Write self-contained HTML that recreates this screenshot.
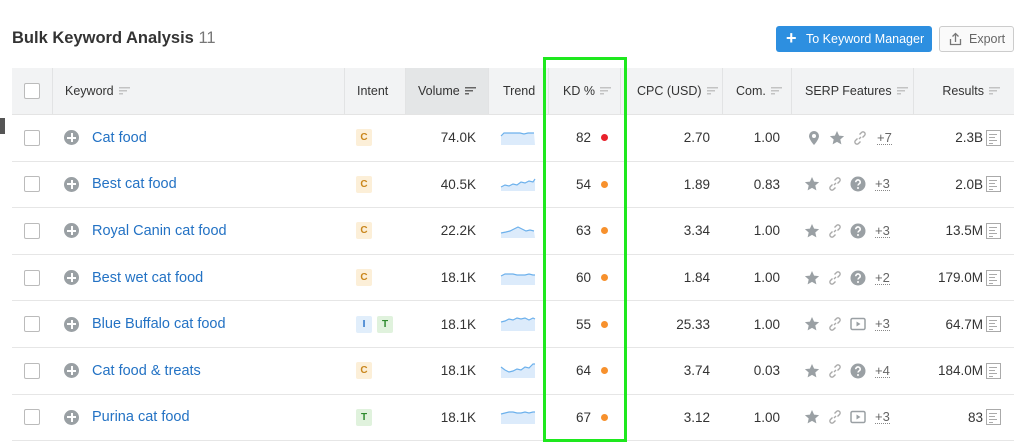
<!DOCTYPE html>
<html><head><meta charset="utf-8"><style>
*{margin:0;padding:0;box-sizing:border-box}
body{width:1024px;height:444px;background:#fff;font-family:"Liberation Sans",sans-serif;color:#333;position:relative;overflow:hidden}
.title{position:absolute;left:12px;top:29px;font-size:16.5px;font-weight:bold;color:#333}
.title span{font-weight:normal;color:#777}
.btn1{position:absolute;left:776px;top:26px;width:156px;height:26px;background:#2d8fe0;border-radius:3px;color:#fff;font-size:12.5px;line-height:26px;padding-left:30px}
.btn1:before{content:"+";position:absolute;left:10px;top:-1px;font-size:18px;font-weight:bold}
.btn2{position:absolute;left:939px;top:26px;width:75px;height:26px;border:1px solid #ccc;border-radius:3px;color:#666;font-size:12.5px;line-height:24px;padding-left:29px;background:#fafafa}
.hdr{position:absolute;left:12px;top:68px;width:1002px;height:47px;background:#f2f3f4;border-bottom:1px solid #e4e4e4}
.c{position:absolute;height:100%;display:flex;align-items:center;font-size:12.5px;color:#333}
.hdr .c{border-left:1px solid #e2e3e4}
.r{position:absolute;left:12px;width:1002px;height:46.6px;border-bottom:1px solid #e6e6e6}
.cb{width:16px;height:16px;border:1px solid #bbb;border-radius:2px;background:#fff}
.s{display:inline-block;width:11px;height:8px;margin-left:5px;background:linear-gradient(#c3c3c3,#c3c3c3) 0 0/11px 1.5px no-repeat,linear-gradient(#c3c3c3,#c3c3c3) 0 3px/8px 1.5px no-repeat,linear-gradient(#c3c3c3,#c3c3c3) 0 6px/4px 1.5px no-repeat}
.plus{width:15px;height:15px;border-radius:50%;background:#9aa0a4;position:relative;margin-right:13px}
.plus:before{content:"";position:absolute;left:3px;top:6.5px;width:9px;height:2px;background:#fff}
.plus:after{content:"";position:absolute;left:6.5px;top:3px;width:2px;height:9px;background:#fff}
.kw{color:#2372c4;font-size:14.5px}
.t{display:inline-block;width:16px;height:17px;border-radius:2px;font-size:10px;font-weight:bold;text-align:center;line-height:17px;margin-right:5px}
.tc{background:#fcefd8;color:#c9861c}.tt{background:#e0f2dd;color:#2c8a2c}.ti{background:#e1eefb;color:#2a74c9}
.n{font-size:13.5px;justify-content:flex-end}
.dot{display:inline-block;width:7px;height:7px;border-radius:50%;background:#f7912d;margin-left:10px}
.more{font-size:13px;color:#666;border-bottom:1px dotted #888;line-height:13px;margin-left:2px}
.doc{display:inline-block;width:15px;height:16px;border:1px solid #aaa;margin-left:3px;background:linear-gradient(#aaa,#aaa) 2px 3px/8px 1px no-repeat,linear-gradient(#aaa,#aaa) 2px 6px/6px 1px no-repeat,linear-gradient(#aaa,#aaa) 2px 9px/8px 1px no-repeat,linear-gradient(#aaa,#aaa) 2px 12px/4px 1px no-repeat}
svg.i{margin-right:7px}
.green{position:absolute;left:543px;top:57px;width:84px;height:385px;border:3px solid #1ee81e}
.tab{position:absolute;left:0;top:118px;width:5px;height:16px;background:#555}
</style></head><body>
<div class="title">Bulk Keyword Analysis <span>11</span></div>
<div class="btn1">To Keyword Manager</div>
<div class="btn2"><svg style="position:absolute;left:9px;top:5px" width="13" height="14" viewBox="0 0 13 14"><path d="M6.5 10V2M3.5 4.5l3-3 3 3M1.5 7v5.5h10V7" fill="none" stroke="#777" stroke-width="1.3"/></svg>Export</div>
<div class="tab"></div>
<div class="hdr">
<div class="c" style="left:0;width:40px;border-left:none;justify-content:center"><div class="cb"></div></div>
<div class="c" style="left:40px;width:292px;padding-left:12px">Keyword<i class="s"></i></div>
<div class="c" style="left:332px;width:61px;padding-left:12px">Intent</div>
<div class="c" style="left:393px;width:83px;padding-left:12px;background:#e4e6e7">Volume<i class="s" style="background:linear-gradient(#666,#666) 0 0/11px 1.5px no-repeat,linear-gradient(#666,#666) 0 3px/8px 1.5px no-repeat,linear-gradient(#666,#666) 0 6px/4px 1.5px no-repeat"></i></div>
<div class="c" style="left:476px;width:60px;padding-left:14px">Trend</div>
<div class="c" style="left:536px;width:72px;padding-left:14px">KD %<i class="s"></i></div>
<div class="c" style="left:608px;width:102px;padding-left:16px">CPC (USD)<i class="s"></i></div>
<div class="c" style="left:710px;width:69px;padding-left:13px">Com.<i class="s"></i></div>
<div class="c" style="left:779px;width:122px;padding-left:13px">SERP Features<i class="s"></i></div>
<div class="c" style="left:901px;width:101px;justify-content:flex-end;padding-right:14px">Results<i class="s"></i></div>
</div>
<svg width="0" height="0" style="position:absolute">
<defs>
<symbol id="star" viewBox="0 0 16 16"><path d="M8 1l2.1 4.6 5 .5-3.8 3.4 1.1 4.9L8 11.9 3.6 14.4l1.1-4.9L.9 6.1l5-.5z" fill="#9aa0a4"/></symbol>
<symbol id="link" viewBox="0 0 16 16"><path d="M7 9l2-2M5.5 8.5l-2 2a2 2 0 003 3l2-2M10.5 7.5l2-2a2 2 0 00-3-3l-2 2" fill="none" stroke="#aaa" stroke-width="1.4"/></symbol>
<symbol id="q" viewBox="0 0 16 16"><circle cx="8" cy="8" r="7.5" fill="#9aa0a4"/><path d="M5.8 6.2a2.2 2.2 0 114 1.2c-.8.6-1.8.9-1.8 2.1" fill="none" stroke="#fff" stroke-width="1.6"/><circle cx="8" cy="12" r="1" fill="#fff"/></symbol>
<symbol id="pin" viewBox="0 0 16 16"><path d="M8 1a5 5 0 00-5 5c0 3.5 5 9 5 9s5-5.5 5-9a5 5 0 00-5-5z" fill="#9aa0a4"/><circle cx="8" cy="6" r="2" fill="#fff"/></symbol>
<symbol id="play" viewBox="0 0 16 16"><rect x="1" y="2.5" width="14" height="11" rx="1.5" fill="none" stroke="#9aa0a4" stroke-width="1.5"/><path d="M6.5 5.5v5l4-2.5z" fill="#9aa0a4"/></symbol>
</defs></svg>

<div class="r" style="top:115px">
<div class="c" style="left:0;width:40px;justify-content:center"><div class="cb"></div></div>
<div class="c" style="left:52px"><div class="plus"></div><span class="kw">Cat food</span></div>
<div class="c" style="left:344px"><span class="t tc">C</span></div>
<div class="c n" style="left:393px;width:71px">74.0K</div>
<div class="c" style="left:488px"><svg width="36" height="16"><path d="M1 6 4 3 8 3 12 3 16 3 20 3 24 4 28 3 32 3 34 3 35 15 1 15z" fill="#dcebfb"/><path d="M1 6 4 3 8 3 12 3 16 3 20 3 24 4 28 3 32 3 34 3" fill="none" stroke="#6db1ec" stroke-width="1.2"/></svg></div>
<div class="c n" style="left:536px;width:60px">82<span class="dot" style="background:#e8212b"></span></div>
<div class="c n" style="left:608px;width:90px">2.70</div>
<div class="c n" style="left:710px;width:58px">1.00</div>
<div class="c" style="left:794px"><svg class="i" width="16" height="16"><use href="#pin"/></svg><svg class="i" width="16" height="16"><use href="#star"/></svg><svg class="i" width="16" height="16"><use href="#link"/></svg><span class="more">+7</span></div>
<div class="c n" style="left:901px;width:88px">2.3B<i class="doc"></i></div>
</div>

<div class="r" style="top:161.6px">
<div class="c" style="left:0;width:40px;justify-content:center"><div class="cb"></div></div>
<div class="c" style="left:52px"><div class="plus"></div><span class="kw">Best cat food</span></div>
<div class="c" style="left:344px"><span class="t tc">C</span></div>
<div class="c n" style="left:393px;width:71px">40.5K</div>
<div class="c" style="left:488px"><svg width="36" height="16"><path d="M1 11 5 9 9 10 13 8 17 9 21 6 25 7 29 5 33 6 35 3 35 15 1 15z" fill="#dcebfb"/><path d="M1 11 5 9 9 10 13 8 17 9 21 6 25 7 29 5 33 6 35 3" fill="none" stroke="#6db1ec" stroke-width="1.2"/></svg></div>
<div class="c n" style="left:536px;width:60px">54<span class="dot"></span></div>
<div class="c n" style="left:608px;width:90px">1.89</div>
<div class="c n" style="left:710px;width:58px">0.83</div>
<div class="c" style="left:792px"><svg class="i" width="16" height="16"><use href="#star"/></svg><svg class="i" width="16" height="16"><use href="#link"/></svg><svg class="i" width="16" height="16"><use href="#q"/></svg><span class="more">+3</span></div>
<div class="c n" style="left:901px;width:88px">2.0B<i class="doc"></i></div>
</div>

<div class="r" style="top:208.2px">
<div class="c" style="left:0;width:40px;justify-content:center"><div class="cb"></div></div>
<div class="c" style="left:52px"><div class="plus"></div><span class="kw">Royal Canin cat food</span></div>
<div class="c" style="left:344px"><span class="t tc">C</span></div>
<div class="c n" style="left:393px;width:71px">22.2K</div>
<div class="c" style="left:488px"><svg width="36" height="16"><path d="M1 10 6 9 10 8 14 6 18 4 22 6 26 8 30 7 34 8 35 15 1 15z" fill="#dcebfb"/><path d="M1 10 6 9 10 8 14 6 18 4 22 6 26 8 30 7 34 8" fill="none" stroke="#6db1ec" stroke-width="1.2"/></svg></div>
<div class="c n" style="left:536px;width:60px">63<span class="dot"></span></div>
<div class="c n" style="left:608px;width:90px">3.34</div>
<div class="c n" style="left:710px;width:58px">1.00</div>
<div class="c" style="left:792px"><svg class="i" width="16" height="16"><use href="#star"/></svg><svg class="i" width="16" height="16"><use href="#link"/></svg><svg class="i" width="16" height="16"><use href="#q"/></svg><span class="more">+3</span></div>
<div class="c n" style="left:901px;width:88px">13.5M<i class="doc"></i></div>
</div>

<div class="r" style="top:254.8px">
<div class="c" style="left:0;width:40px;justify-content:center"><div class="cb"></div></div>
<div class="c" style="left:52px"><div class="plus"></div><span class="kw">Best wet cat food</span></div>
<div class="c" style="left:344px"><span class="t tc">C</span></div>
<div class="c n" style="left:393px;width:71px">18.1K</div>
<div class="c" style="left:488px"><svg width="36" height="16"><path d="M1 6 5 4 9 4 13 4 17 5 21 5 25 5 29 4 33 5 35 5 35 15 1 15z" fill="#dcebfb"/><path d="M1 6 5 4 9 4 13 4 17 5 21 5 25 5 29 4 33 5 35 5" fill="none" stroke="#6db1ec" stroke-width="1.2"/></svg></div>
<div class="c n" style="left:536px;width:60px">60<span class="dot"></span></div>
<div class="c n" style="left:608px;width:90px">1.84</div>
<div class="c n" style="left:710px;width:58px">1.00</div>
<div class="c" style="left:792px"><svg class="i" width="16" height="16"><use href="#star"/></svg><svg class="i" width="16" height="16"><use href="#link"/></svg><svg class="i" width="16" height="16"><use href="#q"/></svg><span class="more">+2</span></div>
<div class="c n" style="left:901px;width:88px">179.0M<i class="doc"></i></div>
</div>

<div class="r" style="top:301.4px">
<div class="c" style="left:0;width:40px;justify-content:center"><div class="cb"></div></div>
<div class="c" style="left:52px"><div class="plus"></div><span class="kw">Blue Buffalo cat food</span></div>
<div class="c" style="left:344px"><span class="t ti">I</span><span class="t tt">T</span></div>
<div class="c n" style="left:393px;width:71px">18.1K</div>
<div class="c" style="left:488px"><svg width="36" height="16"><path d="M1 6 5 5 9 3 13 4 17 2 21 3 25 2 29 4 33 2 35 3 35 15 1 15z" fill="#dcebfb"/><path d="M1 6 5 5 9 3 13 4 17 2 21 3 25 2 29 4 33 2 35 3" fill="none" stroke="#6db1ec" stroke-width="1.2"/></svg></div>
<div class="c n" style="left:536px;width:60px">55<span class="dot"></span></div>
<div class="c n" style="left:608px;width:90px">25.33</div>
<div class="c n" style="left:710px;width:58px">1.00</div>
<div class="c" style="left:792px"><svg class="i" width="16" height="16"><use href="#star"/></svg><svg class="i" width="16" height="16"><use href="#link"/></svg><svg class="i" width="16" height="16"><use href="#play"/></svg><span class="more">+3</span></div>
<div class="c n" style="left:901px;width:88px">64.7M<i class="doc"></i></div>
</div>

<div class="r" style="top:348px">
<div class="c" style="left:0;width:40px;justify-content:center"><div class="cb"></div></div>
<div class="c" style="left:52px"><div class="plus"></div><span class="kw">Cat food &amp; treats</span></div>
<div class="c" style="left:344px"><span class="t tc">C</span></div>
<div class="c n" style="left:393px;width:71px">18.1K</div>
<div class="c" style="left:488px"><svg width="36" height="16"><path d="M1 4 5 7 9 9 13 8 17 6 21 7 25 4 29 5 33 1 35 1 35 15 1 15z" fill="#dcebfb"/><path d="M1 4 5 7 9 9 13 8 17 6 21 7 25 4 29 5 33 1 35 1" fill="none" stroke="#6db1ec" stroke-width="1.2"/></svg></div>
<div class="c n" style="left:536px;width:60px">64<span class="dot"></span></div>
<div class="c n" style="left:608px;width:90px">3.74</div>
<div class="c n" style="left:710px;width:58px">0.03</div>
<div class="c" style="left:792px"><svg class="i" width="16" height="16"><use href="#star"/></svg><svg class="i" width="16" height="16"><use href="#link"/></svg><svg class="i" width="16" height="16"><use href="#q"/></svg><span class="more">+4</span></div>
<div class="c n" style="left:901px;width:88px">184.0M<i class="doc"></i></div>
</div>

<div class="r" style="top:394.6px">
<div class="c" style="left:0;width:40px;justify-content:center"><div class="cb"></div></div>
<div class="c" style="left:52px"><div class="plus"></div><span class="kw">Purina cat food</span></div>
<div class="c" style="left:344px"><span class="t tt">T</span></div>
<div class="c n" style="left:393px;width:71px">18.1K</div>
<div class="c" style="left:488px"><svg width="36" height="16"><path d="M1 5 5 4 9 3 13 3 17 4 21 4 25 3 29 4 33 3 35 3 35 15 1 15z" fill="#dcebfb"/><path d="M1 5 5 4 9 3 13 3 17 4 21 4 25 3 29 4 33 3 35 3" fill="none" stroke="#6db1ec" stroke-width="1.2"/></svg></div>
<div class="c n" style="left:536px;width:60px">67<span class="dot"></span></div>
<div class="c n" style="left:608px;width:90px">3.12</div>
<div class="c n" style="left:710px;width:58px">1.00</div>
<div class="c" style="left:792px"><svg class="i" width="16" height="16"><use href="#star"/></svg><svg class="i" width="16" height="16"><use href="#link"/></svg><svg class="i" width="16" height="16"><use href="#play"/></svg><span class="more">+3</span></div>
<div class="c n" style="left:901px;width:88px">83<i class="doc"></i></div>
</div>

<div class="green"></div>
</body></html>
